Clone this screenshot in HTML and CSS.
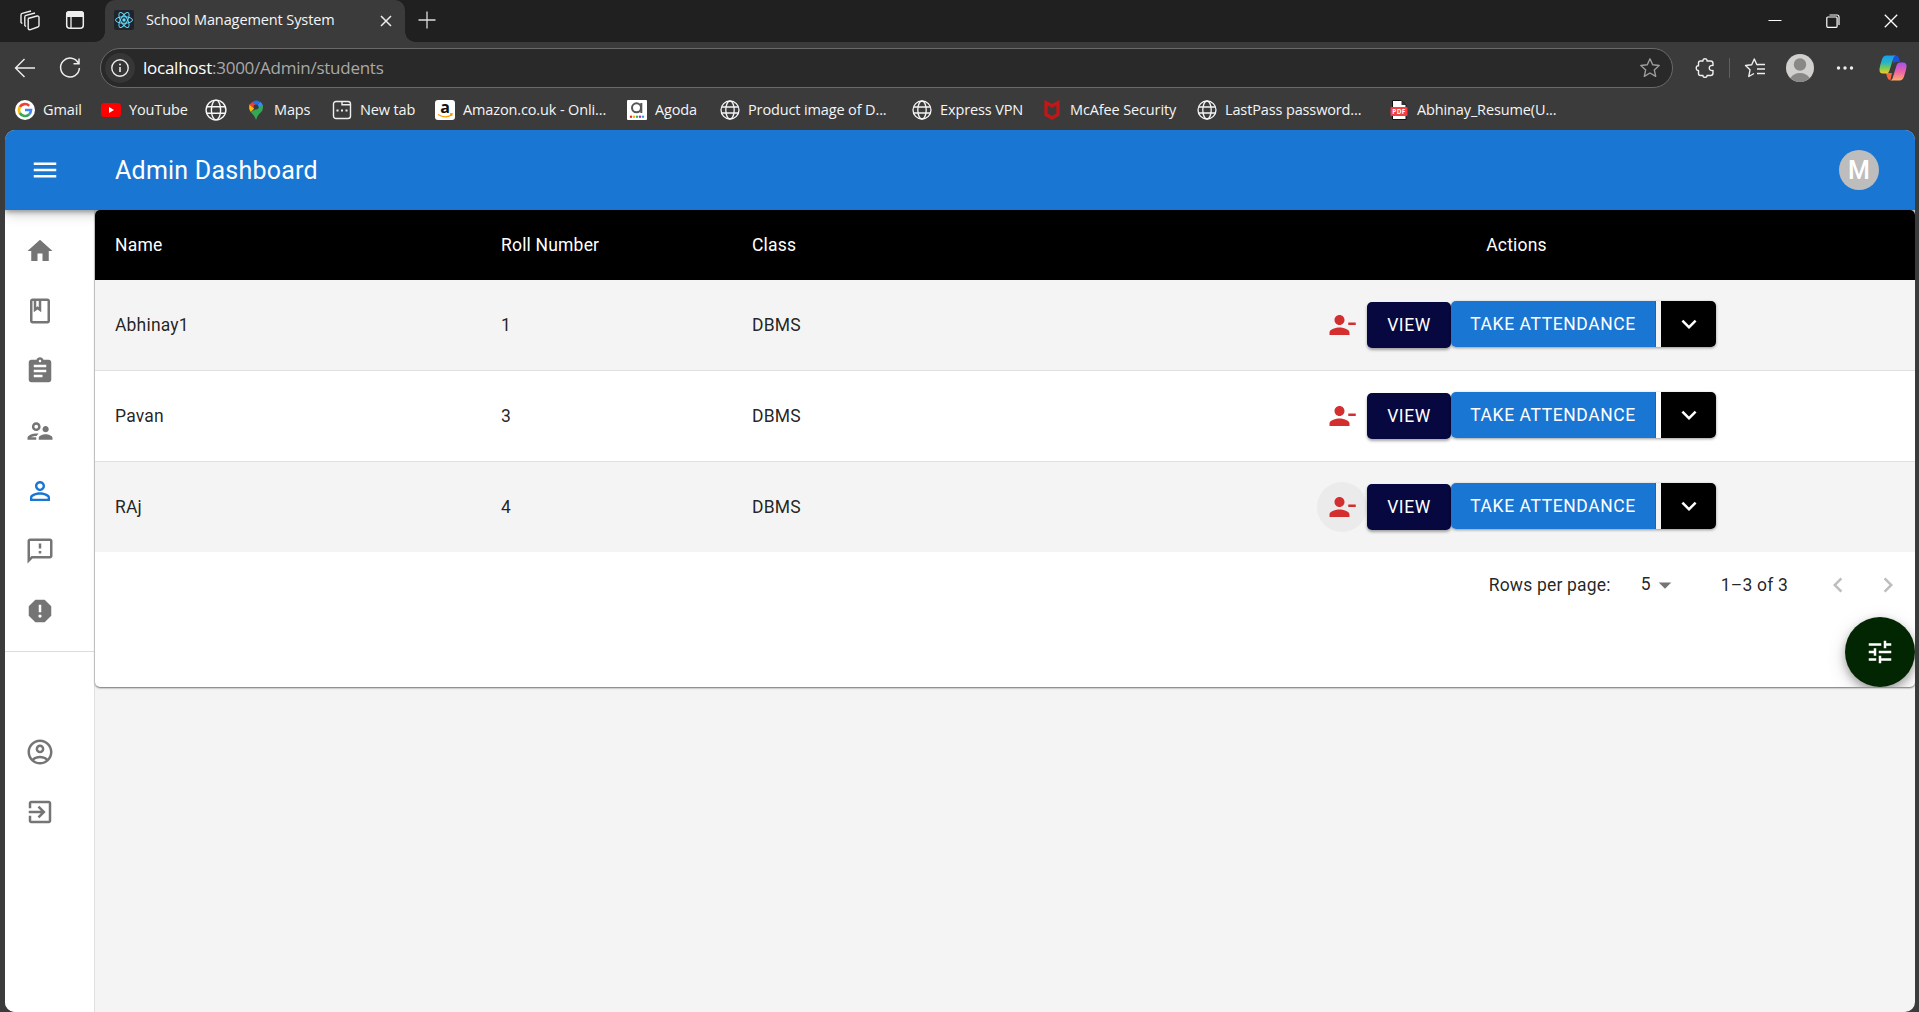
FILE: index.html
```html
<!DOCTYPE html>
<html lang="en">
<head>
<meta charset="utf-8">
<title>School Management System</title>
<link rel="stylesheet" href="styles.css">
</head>
<body>
<svg class="defs" width="0" height="0">
  <symbol id="globe" viewBox="0 0 20 20"><g fill="none" stroke="#f5f5f5" stroke-width="1.3"><circle cx="10" cy="10" r="9"/><ellipse cx="10" cy="10" rx="4.2" ry="9"/><path d="M1.8 7H18.2M1.8 13H18.2"/></g></symbol>
  <symbol id="remove" viewBox="0 0 24 24"><path d="M14 8c0-2.21-1.79-4-4-4S6 5.790 6 8s1.790 4 4 4 4-1.790 4-4zm3 2v2h6v-2h-6zM2 18v2h16v-2c0-2.660-5.330-4-8-4s-8 1.340-8 4z"/></symbol>
  <symbol id="down" viewBox="0 0 24 24"><path d="M7.410 8.590 12 13.170l4.590-4.580L18 10l-6 6-6-6 1.410-1.410z"/></symbol>
</svg>
<div class="browser">
  <div class="titlebar">
    <div class="window-tools">
      <svg width="22" height="22" viewBox="0 0 22 22" fill="none" stroke="#eee" stroke-width="1.4" stroke-linejoin="round"><path d="M9 8.500 18 6q2-.3 2 1.500v8q0 1-1.200 1.500L11.500 19.600Q9.500 20 9.200 18.500V9.500Q9.200 8.500 10 8.200M7 16.500 5.800 15.500V7q0-1.200 1.200-1.600L16 3M3.300 13.500 2 12.500V5q0-1.200 1.200-1.600L12 1"/></svg>
      <svg width="20" height="20" viewBox="0 0 20 20"><rect x="1.700" y="1.700" width="16.600" height="16.600" rx="3" fill="none" stroke="#eee" stroke-width="1.500"/><path d="M1 7V4q0-3 3-3h12q3 0 3 3v3z" fill="#eee"/><path d="M6 7v11" stroke="#eee" stroke-width="1.300"/></svg>
    </div>
    <div class="tab">
      <svg class="favicon" width="20" height="20" viewBox="0 0 20 20"><rect width="20" height="20" rx="2" fill="#20232a"/><g fill="none" stroke="#61dafb" stroke-width="1"><ellipse cx="10" cy="10" rx="8.500" ry="3.300"/><ellipse cx="10" cy="10" rx="8.500" ry="3.300" transform="rotate(60 10 10)"/><ellipse cx="10" cy="10" rx="8.500" ry="3.300" transform="rotate(120 10 10)"/></g><circle cx="10" cy="10" r="1.700" fill="#61dafb"/></svg>
      <span class="tab-title">School Management System</span>
      <svg width="12" height="12" viewBox="0 0 12 12" stroke="#eee" stroke-width="1.500"><path d="M1 1 11 11M11 1 1 11"/></svg>
    </div>
    <svg class="new-tab" width="18" height="18" viewBox="0 0 18 18" stroke="#ddd" stroke-width="1.300"><path d="M9 .5V17.500M.5 9H17.500"/></svg>
    <div class="window-controls">
      <svg width="14" height="14" viewBox="0 0 14 14"><path d="M.5 6.500H13.500" stroke="#fff"/></svg>
      <svg width="14" height="14" viewBox="0 0 14 14" fill="none" stroke="#fff" stroke-width="1.200"><rect x=".8" y="3" width="10.300" height="10.300" rx="1"/><path d="M3.500 1H11q2 0 2 2v8"/></svg>
      <svg width="14" height="14" viewBox="0 0 14 14" stroke="#fff" stroke-width="1.300"><path d="M.8.8 13.200 13.200M13.200.8.8 13.200"/></svg>
    </div>
  </div>
  <div class="toolbar">
    <svg class="back" width="22" height="20" viewBox="0 0 22 20" fill="none" stroke="#eee" stroke-width="1.400"><path d="M21 10H1.500M10.500 1 1.500 10l9 9"/></svg>
    <svg class="reload" width="22" height="22" viewBox="0 0 22 22" fill="none" stroke="#eee" stroke-width="1.500"><path d="M19.500 6.500A9.400 9.400 0 1 0 20.400 11M20 1.500V6.800H14.500"/></svg>
    <div class="address">
      <span class="info"><svg width="18" height="18" viewBox="0 0 18 18"><circle cx="9" cy="9" r="8.200" fill="none" stroke="#eee" stroke-width="1.400"/><path d="M9 8v5" stroke="#eee" stroke-width="1.600"/><circle cx="9" cy="5.500" r="1" fill="#eee"/></svg></span>
      <span class="url"><b>localhost</b>:3000/Admin/students</span>
      <svg width="22" height="22" viewBox="0 0 22 22" fill="none" stroke="#9d9d9d" stroke-width="1.400" stroke-linejoin="round"><path d="m11 1.800 2.700 6 6.500.7-4.900 4.400 1.400 6.400L11 16l-5.700 3.300 1.400-6.400L1.800 8.500l6.500-.7z"/></svg>
    </div>
    <div class="tool-icons">
      <svg width="20" height="22" viewBox="0 0 20 22" fill="none" stroke="#eee" stroke-width="1.400" stroke-linejoin="round"><path d="M5.500 4H8C7.500 1 12.500 1 12 4h3.500q2.500 0 2.500 2.500V8.500c-5-1-5 6 0 5V16q0 2.500-2.500 2.500H12c.5 2.500-4.500 2.500-4 0H5.500q-2 0-2-2v-3C.5 14 .5 8 3.500 8.800V6q0-2 2-2z"/></svg>
      <i class="divider"></i>
      <svg width="22" height="22" viewBox="0 0 22 22" fill="none" stroke="#eee" stroke-width="1.400" stroke-linejoin="round"><path d="M14.500 7.800 12.800 7.500 10.300 2 7.700 7.700 1.500 8.500l4.500 4.300L4.800 19.500 10 16.500M13.500 7.500H21M13 12H21M13 16.500H21"/></svg>
      <svg class="profile" width="28" height="28" viewBox="0 0 28 28"><circle cx="14" cy="14" r="14" fill="#d2d0ce"/><circle cx="14" cy="10.500" r="6.200" fill="#8a8886"/><path d="M4.300 24Q8 19 14 19t9.700 5A14 14 0 0 1 4.300 24" fill="#8a8886"/></svg>
      <svg class="more" width="18" height="6" viewBox="0 0 18 6" fill="#eee"><circle cx="2.500" cy="3" r="1.700"/><circle cx="9" cy="3" r="1.700"/><circle cx="15.500" cy="3" r="1.700"/></svg>
      <svg class="copilot" width="28" height="28" viewBox="0 0 28 28"><defs><linearGradient id="cool" x1="0" y1="0" x2="0" y2="1"><stop offset="0" stop-color="#189cf2"/><stop offset=".4" stop-color="#28b5c0"/><stop offset=".75" stop-color="#8ccc45"/><stop offset="1" stop-color="#f7c92c"/></linearGradient><linearGradient id="warm" x1="0" y1="0" x2="0" y2="1"><stop offset="0" stop-color="#a652ed"/><stop offset=".5" stop-color="#ed61a9"/><stop offset="1" stop-color="#ffab68"/></linearGradient></defs><path d="M14 1.500h3q2 0 2.700 2L21 8h-4q-2 0-3 2z" fill="#1b50d8"/><path d="M7 19h6l-1.500 7Q9 26 8.300 23.500z" fill="#f9663c"/><path d="M7.500 1.500H17q-2 .5-2.500 2L10.300 17q-.8 2.500-3 2.500H4q-4 0-3.500-4.500.5-4 2.500-9.500 1.200-4 4.500-4z" fill="url(#cool)"/><path d="M20.500 26.500H11q2-.5 2.500-2L17.700 11q.8-2.500 3-2.500H24q4 0 3.500 4.500-.5 4-2.500 9.500-1.200 4-4.500 4z" fill="url(#warm)"/></svg>
    </div>
  </div>
  <nav class="bookmarks">
    <a style="width:86px"><svg width="20" height="20" viewBox="0 0 20 20"><circle cx="10" cy="10" r="10" fill="#fff"/><g fill="none" stroke-width="2.600"><path d="M14.200 5.800A6 6 0 0 0 4.800 7" stroke="#ea4335"/><path d="M4.800 7a6 6 0 0 0 0 6" stroke="#fbbc05"/><path d="M4.800 13A6 6 0 0 0 14 14.500" stroke="#34a853"/><path d="M14 14.500A6 6 0 0 0 16 10h-6" stroke="#4285f4"/></g></svg><span>Gmail</span></a>
    <a style="width:104px"><svg width="20" height="20" viewBox="0 0 20 20"><rect y="3" width="20" height="14" rx="3.500" fill="red"/><path d="m8 7 5 3-5 3z" fill="#fff"/></svg><span>YouTube</span></a>
    <a style="width:41px"><svg width="22" height="22"><use href="#globe"/></svg></a>
    <a style="width:86px"><svg width="20" height="20" viewBox="0 0 20 20"><path d="M14 1.800Q17 3.500 17 7L10 7z" fill="#4285f4"/><path d="M6 2q4-3 8-.2L10 7z" fill="#1a73e8"/><path d="M4.700 12 16.700 5Q18 10 13.500 13.500 11 16 10 20 9 16 4.700 12" fill="#34a853"/><path d="M4.700 12Q2.500 9 3.200 5.500L4 4l5 2 1 1z" fill="#fbbc04"/><path d="M6 2 3.500 5 7.500 8 10 5z" fill="#ea4335"/><circle cx="10" cy="7" r="2.500" fill="#3b3b3b"/></svg><span>Maps</span></a>
    <a style="width:103px"><svg width="20" height="20" viewBox="0 0 20 20" fill="none" stroke="#eee" stroke-width="1.400"><rect x="1.500" y="1.500" width="17" height="17" rx="2.500"/><path d="M10 1.500v3.300h8.500"/><path d="M4.500 10.500h2m2.500 0h2m2.500 0h2" stroke-width="2"/></svg><span>New tab</span></a>
    <a style="width:192px"><svg width="20" height="20" viewBox="0 0 20 20"><rect width="20" height="20" rx="3" fill="#fff"/><text x="10" y="13" text-anchor="middle" class="amazon">a</text><path d="M3 14.500q7 4.500 13.500.5m-1.500-1 2-.2-.3 2.200" fill="none" stroke="#f90" stroke-width="1.300"/></svg><span>Amazon.co.uk - Onli...</span></a>
    <a style="width:93px"><svg width="20" height="20" viewBox="0 0 20 20"><rect width="20" height="20" rx="1" fill="#fff"/><circle cx="9.500" cy="7.800" r="4.500" fill="none" stroke="#555" stroke-width="2"/><path d="M14.300 3v10" stroke="#555" stroke-width="2"/><g><circle cx="4" cy="16.700" r="1.200" fill="#e12d2d"/><circle cx="7" cy="16.700" r="1.200" fill="#ffb000"/><circle cx="10" cy="16.700" r="1.200" fill="#2db757"/><circle cx="13" cy="16.700" r="1.200" fill="#8e3f97"/><circle cx="16" cy="16.700" r="1.200" fill="#349cf0"/></g></svg><span>Agoda</span></a>
    <a style="width:192px"><svg width="20" height="20"><use href="#globe"/></svg><span>Product image of D...</span></a>
    <a style="width:130px"><svg width="20" height="20"><use href="#globe"/></svg><span>Express VPN</span></a>
    <a style="width:155px"><svg width="20" height="20" viewBox="0 0 20 20"><path d="M4 2.500V14.500l6 3.500 6-3.500V2.500L10 6z" fill="none" stroke="#c01818" stroke-width="3.300"/></svg><span>McAfee Security</span></a>
    <a style="width:192px"><svg width="20" height="20"><use href="#globe"/></svg><span>LastPass password...</span></a>
    <a><svg width="20" height="20" viewBox="0 0 20 20"><path d="M3.500.5h9L17 5v14.500H3.500z" fill="#fff" stroke="#111"/><path d="M12.500.5V5H17z" fill="#333"/><rect x="1.500" y="7" width="17" height="9" rx="1" fill="#f23f43"/><text x="10" y="14" text-anchor="middle" class="pdf">PDF</text></svg><span>Abhinay_Resume(U...</span></a>
  </nav>
  <div class="app">
    <header class="appbar">
      <svg class="menu" width="30" height="30" viewBox="0 0 24 24" fill="#fff"><path d="M3 18h18v-2H3v2zm0-5h18v-2H3v2zm0-7v2h18V6H3z"/></svg>
      <h1>Admin Dashboard</h1>
      <span class="avatar">M</span>
    </header>
    <div class="body">
      <aside class="drawer">
        <ul>
          <li><svg viewBox="0 0 24 24"><path d="M10 20v-6h4v6h5v-8h3L12 3 2 12h3v8z"/></svg></li>
          <li><svg viewBox="0 0 24 24"><path d="M18 2H6c-1.100 0-2 .9-2 2v16c0 1.100.9 2 2 2h12c1.100 0 2-.9 2-2V4c0-1.100-.9-2-2-2zM9 4h2v5l-1-.75L9 9V4zm9 16H6V4h1v9l3-2.250L13 13V4h5v16z"/></svg></li>
          <li><svg viewBox="0 0 24 24"><path d="M19 3h-4.180C14.400 1.840 13.300 1 12 1c-1.300 0-2.400.84-2.820 2H5c-1.100 0-2 .9-2 2v14c0 1.100.9 2 2 2h14c1.100 0 2-.9 2-2V5c0-1.100-.9-2-2-2zm-7 0c.55 0 1 .45 1 1s-.45 1-1 1-1-.45-1-1 .45-1 1-1zm2 14H7v-2h7v2zm3-4H7v-2h10v2zm0-4H7V7h10v2z"/></svg></li>
          <li><svg viewBox="0 0 24 24"><path d="M9 12c1.930 0 3.500-1.570 3.500-3.500S10.930 5 9 5 5.500 6.570 5.500 8.500 7.070 12 9 12zm0-5c.83 0 1.500.67 1.500 1.500S9.830 10 9 10s-1.500-.67-1.500-1.500S8.170 7 9 7zm.05 10H4.770c.99-.5 2.700-1 4.230-1 .11 0 .23.010.34.010.34-.73.93-1.330 1.640-1.810-.73-.13-1.420-.2-1.980-.2-2.340 0-7 1.170-7 3.500V19h7v-1.500c0-.17.020-.34.050-.5zm7.450-2.500c-1.840 0-5.500 1.010-5.500 3V19h11v-1.500c0-1.990-3.660-3-5.500-3zm1.210-1.820c.76-.43 1.290-1.240 1.290-2.180C19 9.120 17.880 8 16.500 8S14 9.120 14 10.500c0 .94.53 1.750 1.290 2.180.36.2.77.32 1.210.32s.85-.12 1.210-.32z"/></svg></li>
          <li class="active"><svg viewBox="0 0 24 24"><path d="M12 5.900c1.160 0 2.100.94 2.100 2.100s-.94 2.100-2.100 2.100S9.900 9.160 9.900 8s.94-2.100 2.100-2.100m0 9c2.970 0 6.100 1.460 6.100 2.100v1.100H5.900V17c0-.64 3.130-2.100 6.100-2.100M12 4C9.790 4 8 5.790 8 8s1.790 4 4 4 4-1.790 4-4-1.790-4-4-4zm0 9c-2.670 0-8 1.340-8 4v3h16v-3c0-2.660-5.330-4-8-4z"/></svg></li>
          <li><svg viewBox="0 0 24 24"><path d="M20 2H4c-1.100 0-1.990.9-1.990 2L2 22l4-4h14c1.100 0 2-.9 2-2V4c0-1.100-.9-2-2-2zm0 14H5.170l-.59.59-.58.580V4h16v12zm-9-4h2v2h-2zm0-6h2v4h-2z"/></svg></li>
          <li><svg viewBox="0 0 24 24"><path d="M15.730 3H8.270L3 8.270v7.460L8.270 21h7.460L21 15.730V8.270L15.730 3zM12 17.300c-.72 0-1.300-.58-1.300-1.300s.58-1.300 1.300-1.300 1.300.58 1.300 1.300-.58 1.300-1.300 1.300zm1-4.300h-2V7h2v6z"/></svg></li>
        </ul>
        <hr>
        <ul class="account">
          <li><svg viewBox="0 0 24 24"><path d="M12 2C6.480 2 2 6.480 2 12s4.480 10 10 10 10-4.480 10-10S17.520 2 12 2zM7.350 18.500C8.660 17.560 10.260 17 12 17s3.340.56 4.650 1.500C15.340 19.440 13.740 20 12 20s-3.340-.56-4.650-1.500zm10.790-1.380C16.450 15.800 14.320 15 12 15s-4.450.8-6.140 2.120C4.700 15.730 4 13.950 4 12c0-4.420 3.580-8 8-8s8 3.580 8 8c0 1.950-.7 3.730-1.860 5.120zM12 6c-1.930 0-3.500 1.570-3.500 3.500S10.070 13 12 13s3.500-1.570 3.500-3.500S13.930 6 12 6zm0 5c-.83 0-1.500-.67-1.500-1.500S11.170 8 12 8s1.500.67 1.500 1.500S12.830 11 12 11z"/></svg></li>
          <li><svg viewBox="0 0 24 24"><path d="M19 3H5c-1.110 0-2 .9-2 2v4h2V5h14v14H5v-4H3v4c0 1.100.89 2 2 2h14c1.100 0 2-.9 2-2V5c0-1.100-.9-2-2-2zm-8.920 12.580L11.500 17l5-5-5-5-1.420 1.410L12.670 11H3v2h9.670l-2.590 2.580z"/></svg></li>
        </ul>
      </aside>
      <main>
        <section class="paper">
          <div class="row head"><span>Name</span><span>Roll Number</span><span>Class</span><span class="center">Actions</span></div>
          <div class="row odd"><span>Abhinay1</span><span>1</span><span>DBMS</span><div class="actions"><i class="icon-btn"><svg width="30" height="30"><use href="#remove"/></svg></i><button class="view">VIEW</button><div class="group"><button class="take">TAKE ATTENDANCE</button><button class="drop"><svg width="30" height="30"><use href="#down"/></svg></button></div></div></div>
          <div class="row"><span>Pavan</span><span>3</span><span>DBMS</span><div class="actions"><i class="icon-btn"><svg width="30" height="30"><use href="#remove"/></svg></i><button class="view">VIEW</button><div class="group"><button class="take">TAKE ATTENDANCE</button><button class="drop"><svg width="30" height="30"><use href="#down"/></svg></button></div></div></div>
          <div class="row odd last"><span>RAj</span><span>4</span><span>DBMS</span><div class="actions"><i class="icon-btn hover"><svg width="30" height="30"><use href="#remove"/></svg></i><button class="view">VIEW</button><div class="group"><button class="take">TAKE ATTENDANCE</button><button class="drop"><svg width="30" height="30"><use href="#down"/></svg></button></div></div></div>
          <div class="pagination">
            <span class="label">Rows per page:</span>
            <span class="select">5</span><svg class="caret" width="30" height="30" viewBox="0 0 24 24"><path d="m7 10 5 5 5-5z" fill="#757575"/></svg>
            <span class="range">1–3 of 3</span>
            <svg class="prev" width="30" height="30" viewBox="0 0 24 24" fill="#bdbdbd"><path d="M15.410 16.590 10.830 12l4.580-4.590L14 6l-6 6 6 6 1.410-1.410z"/></svg>
            <svg class="next" width="30" height="30" viewBox="0 0 24 24" fill="#bdbdbd"><path d="M8.590 16.590 13.170 12 8.590 7.410 10 6l6 6-6 6-1.410-1.410z"/></svg>
          </div>
          <div class="dial"><button class="fab"><svg width="30" height="30" viewBox="0 0 24 24" fill="#fff"><path d="M3 17v2h6v-2H3zM3 5v2h10V5H3zm10 16v-2h8v-2h-8v-2h-2v6h2zM7 9v2H3v2h4v2h2V9H7zm14 4v-2H11v2h10zm-6-4h2V7h4V5h-4V3h-2v6z"/></svg></button></div>
        </section>
      </main>
    </div>
  </div>
</div>
</body>
</html>
```
FILE: styles.css
```css
* { box-sizing: border-box; }
body { margin: 0; overflow: hidden; background: #3b3b3b; font-family: Roboto, "Liberation Sans", sans-serif; }
svg { display: block; flex: none; overflow: visible; }
.defs { position: absolute; }
.browser { height: 1012px; display: flex; flex-direction: column; color: #f5f5f5; }

/* Browser window */
.titlebar { height: 42px; background: #202020; display: flex; align-items: flex-start; font: 14.5px "Open Sans", sans-serif; }
.window-tools { width: 105px; padding: 10px 0 0 19px; display: flex; gap: 24px; }
.tab { width: 300px; height: 42px; padding: 0 13px 0 9px; display: flex; align-items: center; background: #3b3b3b; border-radius: 10px 10px 0 0; position: relative; }
.tab::before, .tab::after { content: ""; position: absolute; bottom: 0; width: 10px; height: 10px; }
.tab::before { left: -10px; background: radial-gradient(circle at 0 0, #202020 9.500px, #3b3b3b 10px); }
.tab::after { right: -10px; background: radial-gradient(circle at 100% 0, #202020 9.500px, #3b3b3b 10px); }
.tab > * { margin-bottom: 1px; }
.tab .favicon { margin: 0 12px 2px 0; }
.tab-title { flex: 1; white-space: nowrap; letter-spacing: -.1px; padding-bottom: 2px; }
.new-tab { margin: 11px 0 0 13px; }
.window-controls { margin: 14px 21px 0 auto; display: flex; gap: 44px; }
.toolbar { height: 52px; display: flex; align-items: center; }
.back { margin-left: 14px; }
.reload { margin-left: 23px; }
.address { margin-left: 19px; width: 1573px; height: 40px; border: 1px solid #6a6a6a; border-radius: 20px; background: #292929; display: flex; align-items: center; padding: 0 11px 0 4px; }
.info { width: 30px; height: 30px; border-radius: 50%; background: #363636; display: grid; place-items: center; }
.url { margin-left: 8px; flex: 1; font: 17px "Open Sans", sans-serif; letter-spacing: -.25px; padding-bottom: 2px; color: #a8a8a8; }
.url b { font-weight: 400; color: #fff; }
.tool-icons { flex: 1; margin-left: 22px; display: flex; align-items: center; }
.divider { width: 1px; height: 20px; margin: 0 14px; background: #606060; }
.profile { margin-left: 20px; }
.more { margin-left: 22px; }
.copilot { margin-left: 25px; }
.bookmarks { height: 36px; padding: 0 0 4px 15px; display: flex; align-items: center; font: 14.500px "Open Sans", sans-serif; letter-spacing: -.13px; }
.bookmarks a { display: flex; align-items: center; gap: 8px; white-space: nowrap; flex: none; }
.bookmarks span { padding-bottom: 2px; }
.amazon { font: bold 16px "Open Sans", sans-serif; fill: #111; }
.pdf { font: bold 6.500px "Open Sans", sans-serif; letter-spacing: .3px; fill: #fff; }

/* Application */
.app { flex: 1; min-height: 0; margin: 0 4px 0 5px; border-radius: 10px; overflow: hidden; display: flex; flex-direction: column; background: #f4f4f4; color: rgba(0,0,0,.87); }
.appbar { flex: none; height: 80px; background: #1976d2; color: #fff; display: flex; align-items: center; padding: 0 36px 0 25px; box-shadow: 0 2px 5px rgba(0,0,0,.35), 0 5px 12px rgba(0,0,0,.15); z-index: 1; }
.appbar h1 { margin: 0 0 0 55px; flex: 1; font-size: 25px; font-weight: 450; letter-spacing: .24px; }
.avatar { width: 40px; height: 40px; border-radius: 50%; background: #bdbdbd; font-size: 25px; font-weight: 500; display: grid; place-items: center; }
.body { flex: 1; min-height: 0; display: flex; }
.drawer { width: 90px; background: #fff; border-right: 1px solid #e0e0e0; }
.drawer ul { list-style: none; margin: 0; padding: 11px 0 9px; }
.drawer li { height: 60px; padding-left: 20px; display: flex; align-items: center; color: #757575; }
.drawer li svg { width: 30px; height: 30px; fill: currentColor; }
.drawer li.active { color: #1976d2; }
.drawer hr { border: 0; height: 1px; margin: 1px 0 0; background: #dcdcdc; }
.drawer .account { padding-top: 70px; }
main { flex: 1; min-width: 0; z-index: 2; }
.paper { height: 477px; background: #fff; border-radius: 5px; overflow: hidden; box-shadow: 0 1px 2px rgba(0,0,0,.55); display: flex; flex-direction: column; }
.row { flex: none; height: 91px; display: grid; grid-template-columns: 386px 251px 386px 1fr; align-items: center; font-size: 17.500px; letter-spacing: .19px; border-bottom: 1px solid #e0e0e0; }
.row > span { padding-left: 20px; }
.row > .center { padding: 0; text-align: center; }
.head { height: 70px; background: #000; color: #fff; font-weight: 450; border: 0; }
.odd { background: #f4f4f4; }
.last { height: 90px; border: 0; }
.actions { display: flex; align-items: center; justify-content: center; }
.icon-btn { width: 50px; height: 50px; border-radius: 50%; display: grid; place-items: center; fill: #d32f2f; }
.icon-btn.hover { background: #ebebeb; }
button { border: 0; padding: 0; height: 46px; color: #fff; font: 450 17.500px Roboto, sans-serif; letter-spacing: .58px; display: grid; place-items: center; }
.view { width: 84px; background: #06083f; border-radius: 5px; box-shadow: 0 2px 3px rgba(0,0,0,.35); }
.group { display: flex; gap: 5px; height: 46px; margin-bottom: 2px; border-radius: 5px; box-shadow: 0 1px 3px rgba(0,0,0,.4); }
.take { width: 205px; background: #1976d2; border-right: 1px solid #1565c0; border-radius: 5px 0 0 5px; }
.drop { width: 55px; background: #000; border-radius: 0 5px 5px 0; fill: #fff; }
.pagination { height: 65px; display: flex; align-items: center; justify-content: flex-end; padding-right: 12px; font-size: 17.500px; letter-spacing: .19px; }
.select { margin-left: 30px; padding-bottom: 1px; }
.caret { margin-left: -1px; }
.range { margin-left: 41px; }
.prev { margin-left: 35px; }
.next { margin-left: 20px; }
.dial { display: flex; justify-content: flex-end; }
.fab { width: 70px; height: 70px; border-radius: 50%; background: #022602; box-shadow: 0 4px 8px rgba(0,0,0,.3), 0 6px 20px rgba(0,0,0,.15); }
```
